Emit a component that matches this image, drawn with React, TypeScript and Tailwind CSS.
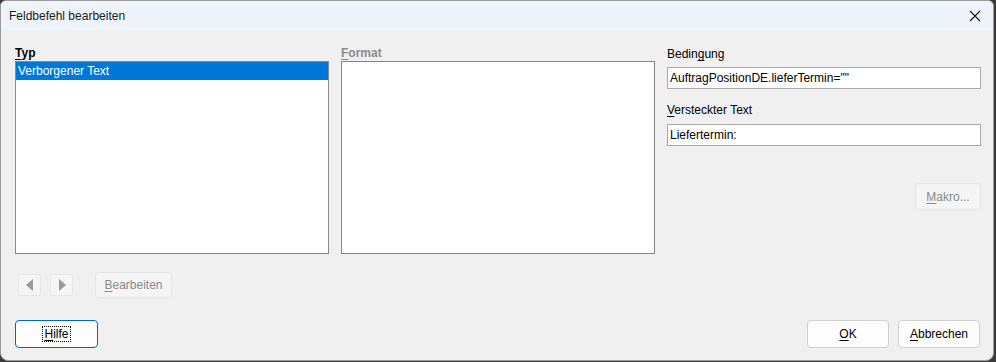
import React from "react";

const font = { fontFamily: '"Liberation Sans", Arial, sans-serif' };

function U({ c }: { c: string }) {
  return <span className="underline underline-offset-[2px] decoration-[1px]">{c}</span>;
}

export default function App() {
  return (
    <div className="w-[996px] h-[362px] bg-[#3a3a3a] overflow-hidden" style={font}>
      <div className="w-[994px] h-[361px] bg-[#f0f0f0] border border-[#9a9a9a] rounded-b-[8px] rounded-t-[6px] overflow-hidden flex flex-col text-[12px] text-black">
        {/* title bar */}
        <div className="h-[30px] shrink-0 bg-[#eef4f9] flex items-center justify-between pl-[8px] pr-[10px]">
          <span className="text-[12px] text-[#1a1a1a]">Feldbefehl bearbeiten</span>
          <svg width="14" height="14" viewBox="0 0 14 14" className="mr-[1px]">
            <path d="M2 2 L12 12 M12 2 L2 12" stroke="#1a1a1a" strokeWidth="1.2" />
          </svg>
        </div>
        {/* body */}
        <div className="flex-1 flex flex-col pl-[14px] pr-[13px] pt-[15px]">
          <div className="grid grid-cols-[314px_314px_314px] gap-x-[12px]">
            {/* col1 */}
            <div className="flex flex-col">
              <div className="h-[15px] leading-[15px] font-bold"><U c="T" />yp</div>
              <div className="h-[193px] bg-white border border-[#828790] pt-[0px]">
                <div className="h-[18px] bg-[#0078d7] text-white leading-[18px] pl-[2px]">Verborgener Text</div>
              </div>
            </div>
            {/* col2 */}
            <div className="flex flex-col">
              <div className="h-[15px] leading-[15px] font-bold text-[#8c8c8c]"><U c="F" />ormat</div>
              <div className="h-[193px] bg-white border border-[#828790]"></div>
            </div>
            {/* col3 */}
            <div className="flex flex-col">
              <div className="h-[15px] leading-[15px] mt-[1px]">Bedin<U c="g" />ung</div>
              <div className="mt-[5px] h-[22px] bg-white border border-[#a9a9a9] leading-[20px] pl-[2px]">AuftragPositionDE.lieferTermin=""</div>
              <div className="mt-[14px] h-[15px] leading-[15px]"><U c="V" />ersteckter Text</div>
              <div className="mt-[6px] h-[22px] bg-white border border-[#a9a9a9] leading-[20px] pl-[2px]">Liefertermin:</div>
              <div className="flex justify-end mt-[37px]">
                <div className="w-[66px] h-[27px] rounded-[4px] bg-[#f5f5f5] border border-[#e6e6e6] text-[#8a8a8a] flex items-center justify-center">
                  <span><U c="M" />akro...</span>
                </div>
              </div>
            </div>
          </div>
          {/* arrows row */}
          <div className="flex items-center mt-[17px] h-[27px] pl-[3px]">
            <div className="w-[23px] h-[22px] rounded-[3px] bg-[#f5f5f5] border border-[#e6e6e6] flex items-center justify-center">
              <svg width="8" height="12" viewBox="0 0 8 12"><path d="M7 0 L0 6 L7 12 Z" fill="#9a9a9a" /></svg>
            </div>
            <div className="ml-[9px] w-[23px] h-[22px] rounded-[3px] bg-[#f5f5f5] border border-[#e6e6e6] flex items-center justify-center">
              <svg width="8" height="12" viewBox="0 0 8 12"><path d="M1 0 L8 6 L1 12 Z" fill="#9a9a9a" /></svg>
            </div>
            <div className="ml-[22px] w-[77px] h-[26px] rounded-[4px] bg-[#f5f5f5] border border-[#e6e6e6] text-[#8a8a8a] flex items-center justify-center">
              <span><U c="B" />earbeiten</span>
            </div>
          </div>
          {/* bottom buttons */}
          <div className="flex items-center justify-between mt-[22px]">
            <div className="w-[83px] h-[28px] rounded-[4px] bg-[#fdfdfd] border border-[#0067c0] flex items-center justify-center">
              <span className="outline outline-1 outline-dotted outline-black px-[1px] leading-[14px]"><U c="H" />ilfe</span>
            </div>
            <div className="flex gap-[9px]">
              <div className="w-[82px] h-[28px] rounded-[4px] bg-[#fdfdfd] border border-[#d0d0d0] flex items-center justify-center">
                <span><U c="O" />K</span>
              </div>
              <div className="w-[82px] h-[28px] rounded-[4px] bg-[#fdfdfd] border border-[#d0d0d0] flex items-center justify-center">
                <span><U c="A" />bbrechen</span>
              </div>
            </div>
          </div>
        </div>
      </div>
    </div>
  );
}
